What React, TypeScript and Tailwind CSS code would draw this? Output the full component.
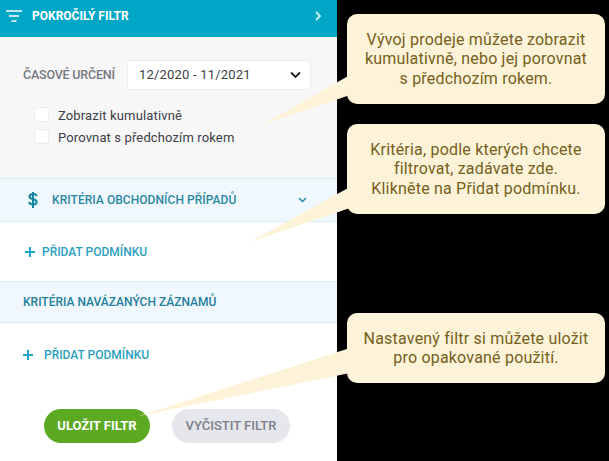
import React from "react";

function Callout({ className, lines }: { className: string; lines: string[] }) {
  return (
    <div className={`absolute left-[347px] w-[258px] rounded-[10px] bg-[#fdf3d8] flex flex-col items-center justify-center text-[#75601c] text-[16px] leading-[19.5px] tracking-[0.2px] ${className}`}>
      {lines.map((l) => (
        <div key={l}>{l}</div>
      ))}
    </div>
  );
}

function Plus() {
  return (
    <svg width="12" height="12" viewBox="0 0 12 12" className="shrink-0">
      <path d="M6 1v10M1 6h10" stroke="#1ca5c6" strokeWidth="2" />
    </svg>
  );
}

export default function App() {
  return (
    <div className="relative w-[609px] h-[461px] bg-black overflow-hidden font-['Roboto',sans-serif]">
      <div className="w-[337px] h-[461px] bg-white flex flex-col">
        <div className="h-[37px] bg-[#00a6c6] flex items-center pl-[6px] pr-[15px] pb-[6px] shrink-0">
          <svg width="16" height="12" viewBox="0 0 16 12" className="shrink-0">
            <path d="M0 1h16M3 6h10M5.500 11h5" stroke="#fff" strokeWidth="1.600" />
          </svg>
          <span className="ml-[10px] text-white text-[12px] font-bold">POKROČILÝ FILTR</span>
          <svg width="8" height="10" viewBox="0 0 8 10" className="ml-auto">
            <path d="M2 1l4 4-4 4" stroke="#cdeef5" strokeWidth="1.800" fill="none" />
          </svg>
        </div>
        <div className="h-[142px] bg-[#f7f7f8] border-b border-[#d7ebf3] pl-[23px] pt-[23px] shrink-0">
          <div className="flex items-center">
            <span className="w-[104px] text-[#75797f] text-[12.5px] font-medium tracking-[-0.2px]">ČASOVÉ URČENÍ</span>
            <div className="w-[184px] h-[30px] bg-white border border-[#ececef] rounded-[3px] flex items-center pl-[11px] pr-[9px] text-[#3d4047] text-[13px] tracking-[0.2px]">
              12/2020 - 11/2021
              <svg width="11" height="8" viewBox="0 0 11 8" className="ml-auto">
                <path d="M1 1.500l4.500 4.500 4.500-4.500" stroke="#1f2328" strokeWidth="1.800" fill="none" />
              </svg>
            </div>
          </div>
          <div className="mt-[17px] pl-[11px] flex flex-col gap-[7px]">
            <div className="flex items-center h-[15px] gap-[9px]">
              <span className="w-[15px] h-[15px] bg-white border border-[#ececef] rounded-[3px]" />
              <span className="mt-[2px] text-[#3d4047] text-[13px] tracking-[0.15px]">Zobrazit kumulativně</span>
            </div>
            <div className="flex items-center h-[15px] gap-[9px]">
              <span className="w-[15px] h-[15px] bg-white border border-[#ececef] rounded-[3px]" />
              <span className="mt-[2px] text-[#3d4047] text-[13px] tracking-[0.13px]">Porovnat s předchozím rokem</span>
            </div>
          </div>
        </div>
        <div className="h-[43px] bg-[#f0f8fd] border-b border-[#d7ebf3] flex items-center pl-[28px] pr-[30px] shrink-0">
          <svg width="10" height="16" viewBox="0 0 10 16" className="shrink-0">
            <path d="M8.600 4.200C8.400 2.700 7 1.900 5 1.900 2.900 1.900 1.500 2.900 1.500 4.400c0 3.600 7.200 1.700 7.200 5.700 0 1.500-1.500 2.400-3.700 2.400-2.300 0-3.700-1-3.900-2.600M5 0v16" stroke="#14849f" strokeWidth="2" fill="none" />
          </svg>
          <span className="ml-[14px] text-[#2b87a3] text-[12px] font-medium tracking-[0.05px]">KRITÉRIA OBCHODNÍCH PŘÍPADŮ</span>
          <svg width="9" height="6" viewBox="0 0 9 6" className="ml-auto">
            <path d="M1 1l3.500 3.500L8 1" stroke="#2b87a3" strokeWidth="1.500" fill="none" />
          </svg>
        </div>
        <div className="h-[60px] border-b border-[#d7ebf3] flex items-center pl-[24px] shrink-0">
          <Plus />
          <span className="ml-[6px] text-[#2b9fbd] text-[12px] font-medium">PŘIDAT PODMÍNKU</span>
        </div>
        <div className="h-[41px] bg-[#f0f8fd] border-b border-[#d7ebf3] flex items-center pl-[23px] shrink-0">
          <span className="text-[#24809c] text-[12px] font-medium">KRITÉRIA NAVÁZANÝCH ZÁZNAMŮ</span>
        </div>
        <div className="h-[64px] flex items-center pl-[22px] shrink-0">
          <Plus />
          <span className="ml-[10px] text-[#2b9fbd] text-[12px] font-medium">PŘIDAT PODMÍNKU</span>
        </div>
        <div className="flex pl-[44px] gap-[22px] mt-[22px]">
          <div className="w-[106px] h-[34px] rounded-full bg-[#5caa22] flex items-center justify-center text-white text-[13px] font-bold">ULOŽIT FILTR</div>
          <div className="w-[118px] h-[34px] rounded-full bg-[#e6e7ed] flex items-center justify-center text-[#7b7f8a] text-[13px] font-medium">VYČISTIT FILTR</div>
        </div>
      </div>
      <svg width="609" height="461" viewBox="0 0 609 461" className="absolute left-0 top-0 pointer-events-none">
        <polygon points="350,75 350,95 262,125" fill="#fdf3d8" />
        <polygon points="350,187 350,208 250,242" fill="#fdf3d8" />
        <polygon points="350,348 350,373 139,416" fill="#fdf3d8" />
      </svg>
      <Callout className="top-[14px] h-[90px]" lines={["Vývoj prodeje můžete zobrazit", "kumulativně, nebo jej porovnat", "s předchozím rokem."]} />
      <Callout className="top-[124px] h-[90px]" lines={["Kritéria, podle kterých chcete", "filtrovat, zadávate zde.", "Klikněte na Přidat podmínku."]} />
      <Callout className="top-[313px] h-[70px]" lines={["Nastavený filtr si můžete uložit", "pro opakované použití."]} />
    </div>
  );
}
